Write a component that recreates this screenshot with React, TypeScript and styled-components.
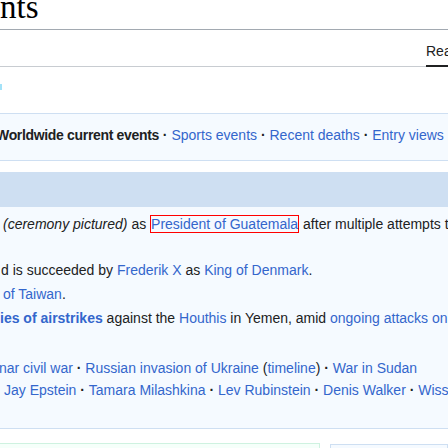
import React from "react";
import styled, { createGlobalStyle } from "styled-components";

const Global = createGlobalStyle`
  html, body { margin: 0; padding: 0; background: #ffffff; }
  body { overflow: hidden; }
`;

const Page = styled.div`
  width: 448px;
  height: 448px;
  overflow: hidden;
  background: #ffffff;
  font-family: "Liberation Sans", Arial, sans-serif;
  font-size: 14px;
  line-height: 22.4px;
  color: #202122;
`;

const Title = styled.h1`
  margin: 0;
  padding: 0 0 15px;
  font-family: "Liberation Serif", "Times New Roman", serif;
  font-weight: normal;
  font-size: 33px;
  line-height: 14px;
  color: #000000;
  white-space: nowrap;
  border-bottom: 1px solid #a2a9b1;
`;

const TabsBar = styled.nav`
  display: flex;
  align-items: flex-end;
  height: 36px;
  padding-left: 426px;
  border-bottom: 1px solid #c8ccd1;
`;

const Tab = styled.span<{ $selected?: boolean }>`
  flex: none;
  margin-bottom: -1px;
  padding-bottom: 4px;
  font-size: 14px;
  line-height: 20px;
  white-space: nowrap;
  color: #202122;
  border-bottom: 2px solid ${(p) => (p.$selected ? "#202122" : "transparent")};
`;

const Gutter = styled.div`
  box-sizing: border-box;
  height: 46px;
  padding-top: 17px;
`;

const Marker = styled.div`
  width: 2px;
  height: 6px;
  background: #a3e2f8;
`;

const HeaderBox = styled.div`
  background: #f5faff;
  border-top: 1px solid #cedff2;
  border-bottom: 1px solid #cedff2;
  padding: 10px 0 13.6px;
`;

const Hlist = styled.ul<{ $indent?: number }>`
  margin: 0;
  padding: 0;
  list-style: none;
  height: 22.4px;
  white-space: nowrap;
  text-indent: ${(p) => p.$indent ?? 0}px;
`;

const HItem = styled.li<{ $current?: boolean }>`
  display: inline;
  font-weight: ${(p) => (p.$current ? "bold" : "normal")};
  letter-spacing: ${(p) => (p.$current ? "-0.33px" : "normal")};
  &:not(:last-child)::after {
    content: " · ";
    font-weight: bold;
    letter-spacing: normal;
    color: #202122;
  }
`;

const Link = styled.a<{ $strong?: boolean; $boxed?: boolean }>`
  color: #3366cc;
  text-decoration: none;
  font-weight: ${(p) => (p.$strong ? "bold" : "normal")};
  border: ${(p) => (p.$boxed ? "1px solid #ff0000" : "none")};
`;

const Italic = styled.i`
  font-style: italic;
`;

const NewsBox = styled.section`
  margin-top: 11px;
  background: #f5faff;
  border-bottom: 1px solid #cedff2;
`;

const NewsBand = styled.div`
  height: 35px;
  background: #cedff2;
`;

const NewsBody = styled.div`
  padding: 6px 0 26.55px;
`;

const Stories = styled.ul`
  margin: 0 0 5.05px;
  padding: 0;
  list-style: none;
`;

const Story = styled.li`
  margin-bottom: 1.4px;
`;

const Line = styled.div<{ $indent?: number }>`
  height: 22.4px;
  white-space: nowrap;
  text-indent: ${(p) => p.$indent ?? 0}px;
`;

const BottomRow = styled.div`
  display: grid;
  grid-template-columns: 320px 1fr;
  column-gap: 10px;
  margin-top: 14px;
`;

const GreenBox = styled.div`
  height: 40px;
  background: #f5fffa;
  border: 1px solid #cef2e0;
  border-left: none;
`;

const BlueBox = styled.div`
  height: 40px;
  margin-top: 1px;
  background: #f5faff;
  border: 1px solid #cedff2;
`;

export default function App() {
  return (
    <>
      <Global />
      <Page>
        <Title>nts</Title>
        <TabsBar>
          <Tab $selected>Read</Tab>
        </TabsBar>
        <Gutter>
          <Marker />
        </Gutter>
        <HeaderBox>
          <Hlist $indent={-4}>
            <HItem $current>Worldwide current events</HItem>
            <HItem>
              <Link>Sports events</Link>
            </HItem>
            <HItem>
              <Link>Recent deaths</Link>
            </HItem>
            <HItem>
              <Link>Entry views b</Link>
            </HItem>
          </Hlist>
        </HeaderBox>
        <NewsBox>
          <NewsBand />
          <NewsBody>
            <Stories>
              <Story>
                <Line $indent={3}>
                  <Italic>(ceremony pictured)</Italic> as{" "}
                  <Link $boxed>President of Guatemala</Link> after multiple attempts t
                </Line>
                <Line />
              </Story>
              <Story>
                <Line $indent={1}>
                  d is succeeded by <Link>Frederik X</Link> as <Link>King of Denmark</Link>.
                </Line>
              </Story>
              <Story>
                <Line $indent={3}>
                  <Link>of Taiwan</Link>.
                </Line>
              </Story>
              <Story>
                <Line $indent={0}>
                  <Link $strong>ies of airstrikes</Link> against the <Link>Houthis</Link> in Yemen, amid{" "}
                  <Link>ongoing attacks on</Link>
                </Line>
                <Line />
              </Story>
            </Stories>
            <Hlist $indent={-1}>
              <HItem>
                <Link>nar civil war</Link>
              </HItem>
              <HItem>
                <Link>Russian invasion of Ukraine</Link> (<Link>timeline</Link>)
              </HItem>
              <HItem>
                <Link>War in Sudan</Link>
              </HItem>
            </Hlist>
            <Hlist $indent={4}>
              <HItem>
                <Link>Jay Epstein</Link>
              </HItem>
              <HItem>
                <Link>Tamara Milashkina</Link>
              </HItem>
              <HItem>
                <Link>Lev Rubinstein</Link>
              </HItem>
              <HItem>
                <Link>Denis Walker</Link>
              </HItem>
              <HItem>
                <Link>Wiss</Link>
              </HItem>
            </Hlist>
          </NewsBody>
        </NewsBox>
        <BottomRow>
          <GreenBox />
          <BlueBox />
        </BottomRow>
      </Page>
    </>
  );
}
